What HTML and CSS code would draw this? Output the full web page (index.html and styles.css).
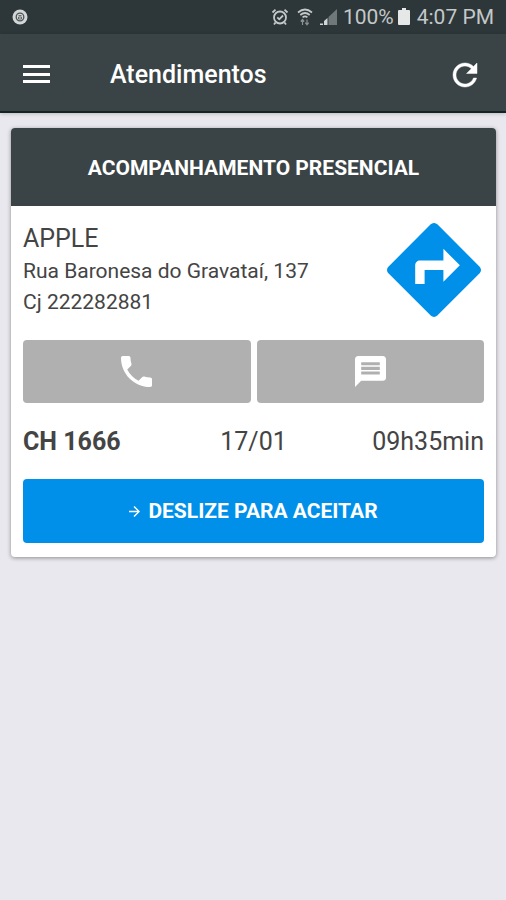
FILE: index.html
```html
<!DOCTYPE html>
<html lang="pt-BR">
<head>
  <meta charset="UTF-8">
  <meta name="viewport" content="width=device-width, initial-scale=1.0">
  <title>Atendimentos</title>
  <link rel="stylesheet" href="styles.css">
</head>
<body>
  <div class="status-bar">
    <svg class="status-app" viewBox="0 0 16 16">
      <circle cx="8" cy="8" r="7.5" fill="#d3d6d6"/>
      <circle cx="8" cy="8" r="3.8" fill="none" stroke="#4a5254" stroke-width="1.3"/>
      <path d="M6.5 6.5h3M6.5 8h3v2h-3z" fill="none" stroke="#4a5254" stroke-width=".8"/>
    </svg>
    <div class="status-right">
      <svg class="status-alarm" viewBox="0 0 18 18">
        <g fill="none" stroke="#c4c8c8" stroke-width="1.8">
          <circle cx="9" cy="9.5" r="6"/>
          <path d="M1.5 4.5l3-2.8M16.5 4.5l-3-2.8M4.5 14.5L3 16.5M13.5 14.5l1.5 2M6.3 9.3l2 2 3.7-3.8"/>
        </g>
      </svg>
      <svg class="status-wifi" viewBox="0 0 16 18">
        <path d="M1 4.5Q8-1.5 15 4.5M3.3 7Q8 3 12.7 7M5.6 9.3Q8 7.3 10.4 9.3" fill="none" stroke="#c4c8c8" stroke-width="1.7"/>
        <path d="M5.5 17v-5M3.8 13.5l1.7-2 1.7 2M10 11.5v5M8.3 14.7l1.7 2 1.7-2" fill="none" stroke="#8c9293" stroke-width="1.2"/>
      </svg>
      <svg class="status-signal" viewBox="0 0 18 18">
        <path d="M18 1v16H9.5V9z" fill="#70787a"/>
        <path d="M5 13l3.5-3v7H5zM1 15.5h3V17H1z" fill="#d3d6d6"/>
      </svg>
      <span class="status-percent">100%</span>
      <svg class="status-battery" viewBox="0 0 12 18">
        <path d="M4 0h4v2h3q1 0 1 1v13q0 1-1 1H1q-1 0-1-1V3q0-1 1-1h3z" fill="#e6e8e8"/>
      </svg>
      <span>4:07 PM</span>
    </div>
  </div>

  <header class="toolbar">
    <button class="icon-button" aria-label="Menu">
      <svg viewBox="0 0 36 36"><path d="M5 8h27v3H5zM5 16h27v3H5zM5 23h27v3H5z"/></svg>
    </button>
    <h1>Atendimentos</h1>
    <button class="icon-button" aria-label="Atualizar">
      <svg viewBox="0 0 24 24" stroke="currentColor" stroke-width=".3"><path d="M17.65 6.35C16.2 4.9 14.21 4 12 4c-4.42 0-7.99 3.58-7.99 8s3.57 8 7.99 8c3.73 0 6.84-2.55 7.73-6h-2.08c-.82 2.33-3.04 4-5.65 4-3.31 0-6-2.69-6-6s2.69-6 6-6c1.66 0 3.14.69 4.22 1.78L13 11h7V4l-2.35 2.35z"/></svg>
    </button>
  </header>

  <main>
    <article class="card">
      <h2 class="card-title">ACOMPANHAMENTO PRESENCIAL</h2>
      <div class="card-body">
        <div class="client">
          <div class="client-info">
            <p class="client-name">APPLE</p>
            <p>Rua Baronesa do Gravataí, 137</p>
            <p>Cj 222282881</p>
          </div>
          <a class="directions" href="#" aria-label="Rota">
            <svg viewBox="2 2 20 20"><path d="M21.71 11.29l-9-9c-.39-.39-1.02-.39-1.41 0l-9 9c-.39.39-.39 1.02 0 1.41l9 9c.39.39 1.02.39 1.41 0l9-9c.39-.38.39-1.01 0-1.41zM14 14.5V12h-4v3H8v-4c0-.55.45-1 1-1h5V7.5l3.5 3.5-3.5 3.5z"/></svg>
          </a>
        </div>

        <div class="contact">
          <button class="contact-button" aria-label="Ligar">
            <svg viewBox="3 3 18 18"><path d="M6.62 10.79c1.44 2.83 3.76 5.14 6.59 6.59l2.2-2.2c.27-.27.67-.36 1.02-.24 1.12.37 2.33.57 3.57.57.55 0 1 .45 1 1V20c0 .55-.45 1-1 1-9.39 0-17-7.61-17-17 0-.55.45-1 1-1h3.5c.55 0 1 .45 1 1 0 1.25.2 2.45.57 3.57.11.35.03.74-.25 1.02l-2.2 2.2z"/></svg>
          </button>
          <button class="contact-button" aria-label="Mensagem">
            <svg viewBox="2 2 20 20"><path d="M20 2H4c-1.1 0-1.99.9-1.99 2L2 22l4-4h14c1.1 0 2-.9 2-2V4c0-1.1-.9-2-2-2zm-2 12H6v-2h12v2zm0-3H6V9h12v2zm0-3H6V6h12v2z"/></svg>
          </button>
        </div>

        <div class="details">
          <strong>CH 1666</strong>
          <span>17/01</span>
          <span>09h35min</span>
        </div>

        <button class="accept">
          <svg viewBox="4 4 16 16"><path d="M12 4l-1.41 1.41L16.17 11H4v2h12.17l-5.58 5.59L12 20l8-8z"/></svg>
          DESLIZE PARA ACEITAR
        </button>
      </div>
    </article>
  </main>
</body>
</html>
```

FILE: styles.css
```css
* {
  box-sizing: border-box;
}

body {
  margin: 0;
  min-height: 100vh;
  background: #e8e8ee;
  color: #444;
  font-family: Roboto, sans-serif;
  font-size: 21px;
}

h1, h2, p {
  margin: 0;
}

button {
  border: none;
  font-family: inherit;
  cursor: pointer;
}

svg {
  display: block;
  fill: currentColor;
}

.status-bar {
  display: flex;
  align-items: center;
  justify-content: space-between;
  height: 34px;
  padding: 0 12px;
  background: #2d3638;
  color: #c4c8c8;
}

.status-app {
  width: 16px;
}

.status-right {
  display: flex;
  align-items: center;
}

.status-alarm,
.status-signal {
  width: 18px;
}

.status-wifi {
  width: 16px;
  margin: 0 6px 0 8px;
}

.status-percent {
  margin-left: 6px;
}

.status-battery {
  width: 12px;
  margin: 0 7px 0 4px;
}

.toolbar {
  display: flex;
  align-items: center;
  height: 79px;
  padding: 4px 23px 0 18px;
  background: #3a4446;
  border-bottom: 2px solid #122426;
  box-shadow: 0 1px 4px rgba(0, 0, 0, 0.2);
  color: #fff;
}

.toolbar h1 {
  flex: 1;
  margin-left: 56px;
  font-size: 25px;
  font-weight: 500;
}

.icon-button {
  padding: 0;
  background: none;
  color: #fff;
}

.icon-button svg {
  width: 36px;
  height: 36px;
}

main {
  padding: 15px 10px 15px 11px;
}

.card {
  overflow: hidden;
  background: #fff;
  border-radius: 4px;
  box-shadow: 0 1px 4px rgba(0, 0, 0, 0.4);
}

.card-title {
  padding: 25px 12px 23px;
  background: #3a4446;
  color: #fff;
  font-size: 21px;
  font-weight: 700;
  line-height: 30px;
  text-align: center;
}

.card-body {
  padding: 17px 12px 14px;
}

.client {
  display: flex;
  justify-content: space-between;
  padding-right: 3px;
}

.client-info {
  line-height: 31px;
}

.client-name {
  margin-bottom: 2px;
  font-size: 25px;
}

.directions {
  color: #0090ea;
}

.directions svg {
  width: 94px;
  height: 94px;
}

.contact {
  display: flex;
  gap: 6px;
  margin-top: 22px;
}

.contact-button {
  display: flex;
  flex: 1;
  align-items: center;
  justify-content: center;
  height: 63px;
  background: #b0b0b0;
  border-radius: 4px;
  color: #fff;
}

.contact-button svg {
  width: 31px;
  height: 31px;
}

.details {
  display: grid;
  grid-template-columns: 1fr auto 1fr;
  margin: 23px 0 21px;
  font-size: 25px;
  line-height: 32px;
}

.details span:last-child {
  text-align: right;
}

.accept {
  display: flex;
  align-items: center;
  justify-content: center;
  gap: 8px;
  width: 100%;
  height: 64px;
  background: #0090ea;
  border-radius: 4px;
  color: #fff;
  font-size: 21px;
  font-weight: 700;
}

.accept svg {
  width: 11px;
}
```
